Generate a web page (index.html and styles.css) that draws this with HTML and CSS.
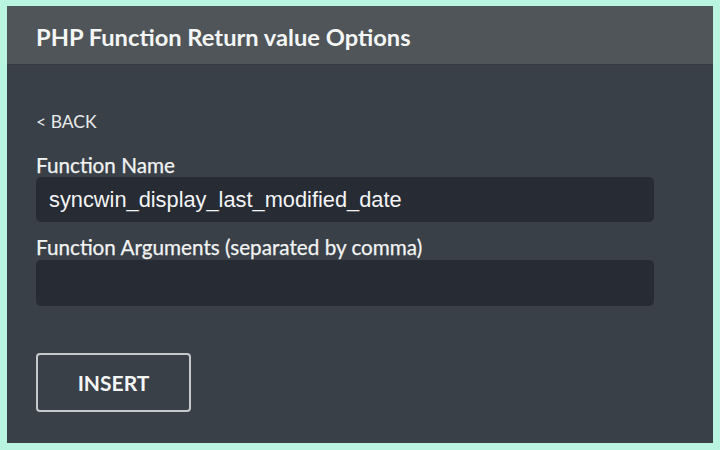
FILE: index.html
```html
<!DOCTYPE html>
<html lang="en">
<head>
<meta charset="utf-8">
<title>PHP Function Return value Options</title>
<link rel="stylesheet" href="styles.css">
</head>
<body>
<div class="frame">
  <div class="panel">
    <header class="panel-header">
      <h1 class="panel-title">PHP Function Return value Options</h1>
    </header>
    <main class="panel-body">
      <a class="back-link" href="#">&lt; BACK</a>
      <label class="field-label" for="fn-name">Function Name</label>
      <input class="field-input" id="fn-name" type="text" value="syncwin_display_last_modified_date">
      <label class="field-label field-label-second" for="fn-args">Function Arguments (separated by comma)</label>
      <input class="field-input field-input-second" id="fn-args" type="text" value="">
      <button class="insert-button" type="button">INSERT</button>
    </main>
  </div>
</div>
</body>
</html>
```

FILE: styles.css
```css
html, body {
  margin: 0;
  padding: 0;
}

body {
  width: 720px;
  height: 450px;
  background: #b8f4e0;
  font-family: Lato, "Noto Sans", sans-serif;
  overflow: hidden;
}

.frame {
  padding: 6px 7px 7px 7px;
  height: 450px;
  box-sizing: border-box;
}

.panel {
  height: 100%;
  background: #394047;
  display: flex;
  flex-direction: column;
}

.panel-header {
  background: #4f5559;
  border-bottom: 1px solid #363c42;
  padding: 17px 29px 13px;
}

.panel-title {
  margin: 0;
  font-size: 23.7px;
  line-height: 28px;
  font-weight: 700;
  color: #f4f5f5;
}

.panel-body {
  display: flex;
  flex-direction: column;
  align-items: flex-start;
  padding: 45px 59px 0 29px;
}

.back-link {
  display: block;
  font-size: 17.5px;
  line-height: 24px;
  color: #e8eaeb;
  text-decoration: none;
  margin-bottom: 19px;
}

.field-label {
  display: block;
  font-size: 20.7px;
  line-height: 24px;
  color: #f2f3f3;
  -webkit-text-stroke: 0.25px #f2f3f3;
}

.field-label-second {
  margin-top: 13px;
}

.field-input {
  display: block;
  box-sizing: border-box;
  width: 618px;
  height: 45px;
  margin: 0;
  padding: 0 13px;
  border: none;
  border-radius: 5px;
  background: #262b34;
  color: #f4f4f4;
  font-family: "Liberation Sans", Arial, sans-serif;
  font-size: 21.8px;
  outline: none;
}

.field-input-second {
  margin-top: 1px;
  height: 46px;
}

.insert-button {
  margin-top: 47px;
  width: 155px;
  height: 59px;
  box-sizing: border-box;
  background: transparent;
  border: 2px solid #c5c9cc;
  border-radius: 4px;
  color: #f4f5f5;
  font-family: Lato, "Noto Sans", sans-serif;
  font-weight: 700;
  font-size: 21px;
  padding: 0;
  cursor: pointer;
}
```
